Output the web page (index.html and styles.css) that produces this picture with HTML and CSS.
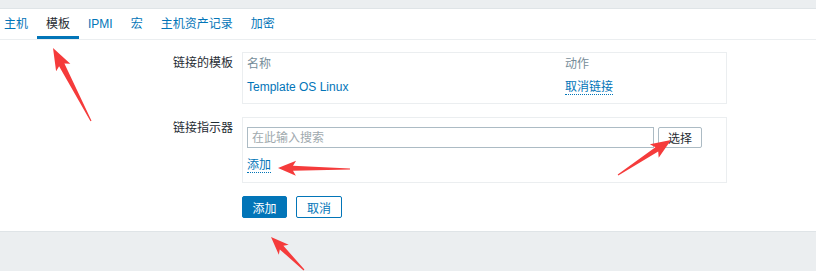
FILE: index.html
```html
<!DOCTYPE html>
<html>
  <head>
    <title>模板</title>
    <link rel="stylesheet" href="styles.css">
  </head>
  <body>
    <div class="top-strip"></div>

    <ul class="tabs">
      <li><a href="#">主机</a></li>
      <li class="active"><a href="#">模板</a></li>
      <li><a href="#">IPMI</a></li>
      <li><a href="#">宏</a></li>
      <li><a href="#">主机资产记录</a></li>
      <li><a href="#">加密</a></li>
    </ul>

    <div class="form">
      <div class="form-label">链接的模板</div>
      <div class="form-box linked">
        <div class="linked-row head">
          <span class="col-name">名称</span>
          <span class="col-action">动作</span>
        </div>
        <div class="linked-row">
          <span class="col-name"><a class="link" href="#">Template OS Linux</a></span>
          <span class="col-action"><a class="link-action" href="#">取消链接</a></span>
        </div>
      </div>

      <div class="form-label">链接指示器</div>
      <div class="form-box picker">
        <div class="picker-row">
          <input class="search" type="text" placeholder="在此输入搜索">
          <button class="btn-select">选择</button>
        </div>
        <div class="add-row">
          <a class="link-action" href="#">添加</a>
        </div>
      </div>

      <div></div>
      <div class="buttons">
        <button class="btn-primary">添加</button>
        <button class="btn-alt">取消</button>
      </div>
    </div>

    <div class="footer"></div>

    <svg class="arrows" id="arrows" width="816" height="271"></svg>

    <script>
      // 红色箭头标注
      function drawArrows() {
        const svg = document.getElementById("arrows");
        const arrows = [
          { tail: [91, 121], tip: [53, 48], head: 19, half: 8, shaft: 6 },
          { tail: [350, 169], tip: [278, 168], head: 15, half: 7.5, shaft: 5 },
          { tail: [618, 175], tip: [671, 140], head: 17, half: 8, shaft: 5 },
          { tail: [304, 270], tip: [271, 237], head: 15, half: 7, shaft: 5 },
        ];

        arrows.forEach((a) => {
          const dx = a.tip[0] - a.tail[0];
          const dy = a.tip[1] - a.tail[1];
          const len = Math.hypot(dx, dy);
          const ux = dx / len;
          const uy = dy / len;
          const nx = -uy;
          const ny = ux;
          const bx = a.tip[0] - ux * a.head;
          const by = a.tip[1] - uy * a.head;
          const cx = a.tip[0] - ux * (a.head + 3);
          const cy = a.tip[1] - uy * (a.head + 3);
          const pts = [
            [a.tail[0] + nx * 0.6, a.tail[1] + ny * 0.6],
            [bx + nx * a.shaft / 2, by + ny * a.shaft / 2],
            [cx + nx * a.half, cy + ny * a.half],
            a.tip,
            [cx - nx * a.half, cy - ny * a.half],
            [bx - nx * a.shaft / 2, by - ny * a.shaft / 2],
            [a.tail[0] - nx * 0.6, a.tail[1] - ny * 0.6],
          ];
          const poly = document.createElementNS("http://www.w3.org/2000/svg", "polygon");
          poly.setAttribute("points", pts.map((p) => p[0].toFixed(1) + "," + p[1].toFixed(1)).join(" "));
          svg.appendChild(poly);
        });
      }

      drawArrows();
    </script>
  </body>
</html>
```

FILE: styles.css
```css
body {
  margin: 0;
  width: 816px;
  height: 271px;
  position: relative;
  overflow: hidden;
  background: #fff;
  color: #1f2c33;
  font-family: Arial, "Liberation Sans", "Noto Sans CJK SC", sans-serif;
  font-size: 12px;
}

a {
  text-decoration: none;
}

.top-strip {
  height: 8px;
  background: #ebeef0;
  border-bottom: 1px solid #dfe4e7;
}

/* 标签页 */
.tabs {
  display: flex;
  margin: 0 0 0 -5px;
  padding: 0;
  list-style: none;
  border-bottom: 1px solid #ebeef0;
}

.tabs li {
  padding: 0 9px;
  height: 30px;
  line-height: 30px;
  box-sizing: border-box;
  border-bottom: 3px solid transparent;
}

.tabs li a {
  color: #0275b8;
}

.tabs li.active {
  border-bottom-color: #0275b8;
}

.tabs li.active a {
  color: #1f2c33;
}

/* 表单 */
.form {
  display: grid;
  grid-template-columns: 233px 485px;
  column-gap: 9px;
  row-gap: 13px;
  padding: 12px 0 13px;
}

.form-label {
  text-align: right;
  line-height: 18px;
  padding-top: 2px;
}

.form-box {
  border: 1px solid #ebeef0;
  padding: 0 4px;
}

.linked {
  padding-top: 2px;
  padding-bottom: 7px;
}

.linked-row {
  display: flex;
  line-height: 18px;
}

.linked-row + .linked-row {
  margin-top: 5px;
}

.linked-row.head {
  color: #768d99;
}

.col-name {
  width: 318px;
}

.link {
  color: #0275b8;
}

.link-action {
  color: #0275b8;
  border-bottom: 1px dotted #0275b8;
}

.picker {
  padding-top: 9px;
  padding-bottom: 9px;
}

.picker-row {
  display: flex;
  gap: 4px;
}

.search {
  width: 407px;
  height: 21px;
  box-sizing: border-box;
  margin: 0;
  padding: 0 4px;
  border: 1px solid #acbbc4;
  font: inherit;
  color: #1f2c33;
}

.search::placeholder {
  color: #a0a9ae;
}

.btn-select {
  width: 44px;
  height: 21px;
  margin: 0;
  padding: 0;
  box-sizing: border-box;
  background: #fff;
  border: 1px solid #acbbc4;
  border-radius: 2px;
  font: inherit;
  color: #1f2c33;
}

.add-row {
  display: flex;
  height: 15px;
  line-height: 15px;
  margin-top: 10px;
}

.buttons {
  display: flex;
  gap: 9px;
}

.buttons button {
  height: 22px;
  margin: 0;
  padding: 0;
  box-sizing: border-box;
  border: 1px solid #0275b8;
  border-radius: 2px;
  font: inherit;
  font-size: 12px;
  white-space: nowrap;
}

.btn-primary {
  width: 45px;
  background: #0275b8;
  color: #fff;
}

.btn-alt {
  width: 46px;
  background: #fff;
  color: #0275b8;
}

.footer {
  height: 40px;
  background: #ebeef0;
  border-top: 1px solid #dfe4e7;
}

/* 红色箭头 */
.arrows {
  position: absolute;
  left: 0;
  top: 0;
  pointer-events: none;
}

.arrows polygon {
  fill: #f53b3b;
}
```
